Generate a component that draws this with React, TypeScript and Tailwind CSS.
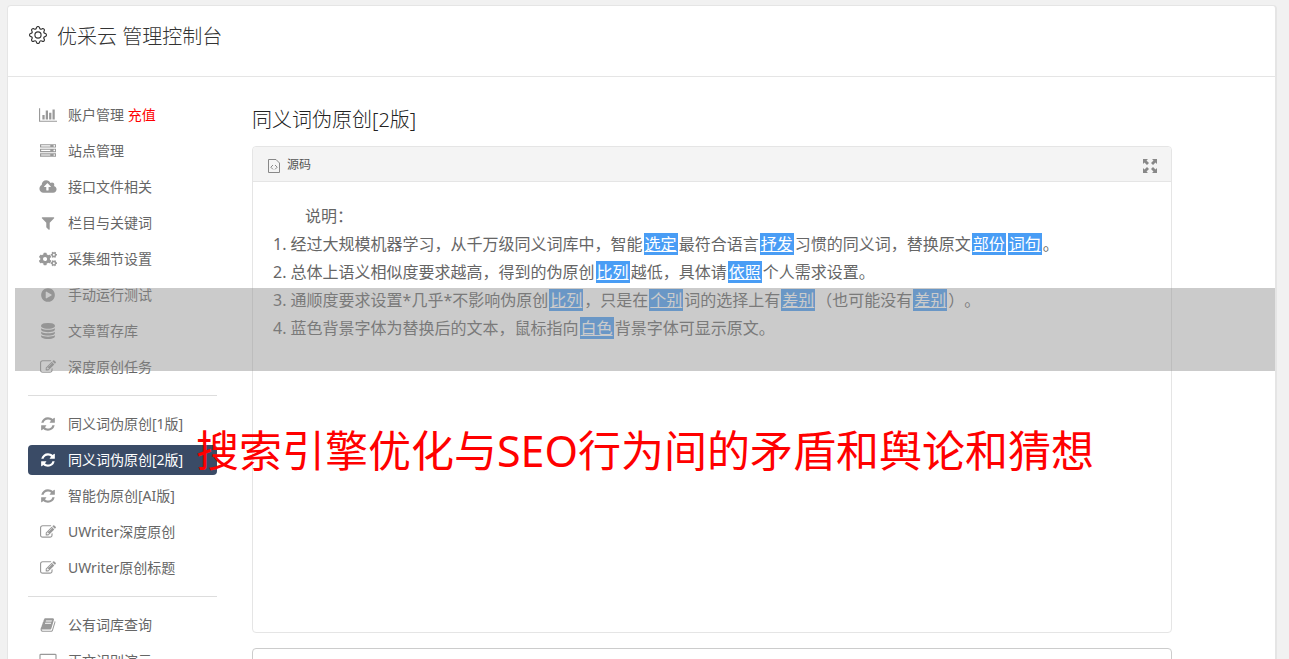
import type { ReactNode } from "react";
import clsx from "clsx";
import { BsGear } from "react-icons/bs";
import { FaCogs } from "react-icons/fa";

const icons = {
  chart: {
    width: 2048,
    d: "M640 896v512h-256v-512h256zm384-512v1024h-256v-1024h256zm1024 1152v128h-2048v-1536h128v1408h1920zm-640-896v768h-256v-768h256zm384-384v1152h-256v-1152h256z",
  },
  server: {
    width: 1792,
    d: "M128 1408h1024v-128h-1024v128zm0-512h1024v-128h-1024v128zm1568 448q0-40-28-68t-68-28-68 28-28 68 28 68 68 28 68-28 28-68zm-1568-960h1024v-128h-1024v128zm1568 448q0-40-28-68t-68-28-68 28-28 68 28 68 68 28 68-28 28-68zm0-512q0-40-28-68t-68-28-68 28-28 68 28 68 68 28 68-28 28-68zm96 832v384h-1792v-384h1792zm0-512v384h-1792v-384h1792zm0-512v384h-1792v-384h1792z",
  },
  upload: {
    width: 1920,
    d: "M1280 864q0-14-9-23l-352-352q-9-9-23-9t-23 9l-351 351q-10 12-10 24 0 14 9 23t23 9h224v352q0 13 9.5 22.5t22.5 9.5h192q13 0 22.5-9.5t9.5-22.5v-352h224q13 0 22.5-9.5t9.5-22.5zm640 288q0 159-112.5 271.5t-271.5 112.5h-1088q-185 0-316.5-131.5t-131.5-316.5q0-130 70-240t188-165q-2-30-2-43 0-212 150-362t362-150q156 0 285.5 87t188.5 231q71-62 166-62 106 0 181 75t75 181q0 76-41 138 130 31 213.5 135.5t83.5 238.5z",
  },
  filter: {
    width: 1792,
    d: "M1595 295q17 41-14 70l-493 493v742q0 42-39 59-13 5-25 5-27 0-45-19l-256-256q-19-19-19-45v-486l-493-493q-31-29-14-70 17-39 59-39h1280q42 0 59 39z",
  },
  play: {
    width: 1792,
    d: "M896 128q209 0 385.5 103t279.5 279.5 103 385.5-103 385.5-279.5 279.5-385.5 103-385.5-103-279.5-279.5-103-385.5 103-385.5 279.5-279.5 385.5-103zm384 823q32-18 32-55t-32-55l-544-320q-31-19-64-1-32 19-32 56v640q0 37 32 56 16 8 32 8 17 0 32-9z",
  },
  database: {
    width: 1792,
    d: "M896 768q237 0 443-43t325-127v170q0 69-103 128t-280 93.5-385 34.5-385-34.5-280-93.5-103-128v-170q119 84 325 127t443 43zm0 768q237 0 443-43t325-127v170q0 69-103 128t-280 93.5-385 34.5-385-34.5-280-93.5-103-128v-170q119 84 325 127t443 43zm0-384q237 0 443-43t325-127v170q0 69-103 128t-280 93.5-385 34.5-385-34.5-280-93.5-103-128v-170q119 84 325 127t443 43zm0-1152q208 0 385 34.5t280 93.5 103 128v128q0 69-103 128t-280 93.5-385 34.5-385-34.5-280-93.5-103-128v-128q0-69 103-128t280-93.5 385-34.5z",
  },
  edit: {
    width: 1792,
    d: "M888 1184l116-116-152-152-116 116v56h96v96h56zm440-720q-16-16-33 1l-350 350q-17 17-1 33t33-1l350-350q17-17 1-33zm80 594v190q0 119-84.5 203.5t-203.5 84.5h-832q-119 0-203.5-84.5t-84.5-203.5v-832q0-119 84.5-203.5t203.5-84.5h832q63 0 117 25 15 7 18 23 3 17-9 29l-49 49q-14 14-32 8-23-6-45-6h-832q-66 0-113 47t-47 113v832q0 66 47 113t113 47h832q66 0 113-47t47-113v-126q0-13 9-22l64-64q15-15 35-7t20 29zm-96-738l288 288-672 672h-288v-288zm444 132l-92 92-288-288 92-92q28-28 68-28t68 28l152 152q28 28 28 68t-28 68z",
  },
  refresh: {
    width: 1792,
    d: "M1639 1056q0 5-1 7-64 268-268 434.5t-478 166.5q-146 0-282.5-55t-243.5-157l-129 129q-19 19-45 19t-45-19-19-45v-448q0-26 19-45t45-19h448q26 0 45 19t19 45-19 45l-137 137q71 66 161 102t187 36q134 0 250-65t186-179q11-17 53-117 8-23 30-23h192q13 0 22.5 9.5t9.5 22.5zm25-800v448q0 26-19 45t-45 19h-448q-26 0-45-19t-19-45 19-45l138-138q-148-137-349-137-134 0-250 65t-186 179q-11 17-53 117-8 23-30 23h-199q-13 0-22.5-9.5t-9.5-22.5v-7q65-268 270-434.5t480-166.5q146 0 284 55.5t245 156.5l130-129q19-19 45-19t45 19 19 45z",
  },
  book: {
    width: 1792,
    d: "M1703 478q40 57 18 129l-275 906q-19 64-76.5 107.5t-122.5 43.5h-923q-77 0-148.5-53.5t-99.5-131.5q-24-67-2-127 0-4 3-27t4-37q1-8-3-21.5t-3-19.5q2-11 8-21t16.5-23.5 16.5-23.5q23-38 45-91.5t30-91.5q3-10 .5-30t-.5-28q3-11 17-28t17-23q21-36 42-92t25-90q1-9-2.5-32t.5-28q4-13 22-30.5t22-22.5q19-26 42.5-84.5t27.5-96.5q1-8-3-25.5t-2-26.5q2-8 9-18t18-23 17-21q8-12 16.5-30.5t15-35 16-36 19.5-32 26.5-23.5 36-11.5 47.5 5.5l-1 3q38-9 51-9h761q74 0 114 56t18 130l-274 906q-36 119-71.5 153.5t-128.5 34.5h-869q-27 0-38 15-11 16-1 43 24 70 144 70h923q29 0 56-15.5t35-41.5l300-987q7-22 5-57 38 15 59 43zm-1064 2q-4 13 2 22.5t20 9.5h608q13 0 25.5-9.5t16.5-22.5l21-64q4-13-2-22.5t-20-9.5h-608q-13 0-25.5 9.5t-16.5 22.5zm-83 256q-4 13 2 22.5t20 9.5h608q13 0 25.5-9.5t16.5-22.5l21-64q4-13-2-22.5t-20-9.5h-608q-13 0-25.5 9.5t-16.5 22.5z",
  },
  laptop: {
    width: 1920,
    d: "M128 96h1664q60 0 94 34t34 94v1064q0 60-34 94t-94 34h-1664q-60 0-94-34t-34-94v-1064q0-60 34-94t94-34zm32 128q-32 0-32 32v1000q0 32 32 32h1600q32 0 32-32v-1000q0-32-32-32zM0 1536h1920v128h-1920z",
  },
};

type IconName = keyof typeof icons;

interface NavItem {
  icon: IconName | "cogs";
  label: string;
  extra?: string;
  active?: boolean;
}

const navGroups: NavItem[][] = [
  [
    { icon: "chart", label: "账户管理", extra: "充值" },
    { icon: "server", label: "站点管理" },
    { icon: "upload", label: "接口文件相关" },
    { icon: "filter", label: "栏目与关键词" },
    { icon: "cogs", label: "采集细节设置" },
    { icon: "play", label: "手动运行测试" },
    { icon: "database", label: "文章暂存库" },
    { icon: "edit", label: "深度原创任务" },
  ],
  [
    { icon: "refresh", label: "同义词伪原创[1版]" },
    { icon: "refresh", label: "同义词伪原创[2版]", active: true },
    { icon: "refresh", label: "智能伪原创[AI版]" },
    { icon: "edit", label: "UWriter深度原创" },
    { icon: "edit", label: "UWriter原创标题" },
  ],
  [
    { icon: "book", label: "公有词库查询" },
    { icon: "laptop", label: "正文识别演示" },
  ],
];

function Icon({ name }: { name: IconName | "cogs" }) {
  if (name === "cogs") return <FaCogs className="h-4 w-[18px]" />;
  const { width, d } = icons[name];
  return (
    <svg viewBox={`0 0 ${width} 1792`} className="h-4 w-[18px]" fill="currentColor" fillRule="evenodd" aria-hidden="true">
      <path d={d} />
    </svg>
  );
}

function NavLink({ item }: { item: NavItem }) {
  return (
    <a
      href="#"
      className={clsx(
        "flex h-[30px] items-center gap-[11px] rounded pl-[11px] text-sm whitespace-nowrap",
        item.active ? "bg-[#3a4b66] text-white" : "text-[#666]"
      )}
    >
      <span className={item.active ? "text-white" : "text-[#999]"}>
        <Icon name={item.icon} />
      </span>
      <span>
        {item.label}
        {item.extra && <span className="text-[#f00]"> {item.extra}</span>}
      </span>
    </a>
  );
}

function Word({ children }: { children: ReactNode }) {
  return <span className="mx-px bg-[#499df5] px-px leading-none text-white underline">{children}</span>;
}

export default function App() {
  return (
    <div className="h-screen overflow-hidden bg-[#f1f1f1] pt-[5px] pr-3 pl-[7px] font-['Noto_Sans','Noto_Sans_CJK_SC',sans-serif] [text-spacing-trim:space-all]">
      <div className="relative min-h-full rounded border border-r-2 border-[#e5e5e5] bg-white">
        <header className="flex h-[71px] items-center gap-2.5 border-b border-[#e5e5e5] px-5 pb-2 text-[#333]">
          <BsGear className="mb-1 ml-px size-[18px]" />
          <h1 className="text-xl font-light">优采云 管理控制台</h1>
        </header>

        <div className="flex gap-[35px] px-5 pt-[23px]">
          <nav className="w-[189px] shrink-0">
            {navGroups.map((group, i) => (
              <ul key={i} className={clsx("space-y-1.5", i > 0 && "mt-[13px] border-t border-[#ddd] pt-[13px]")}>
                {group.map((item) => (
                  <li key={item.label}>
                    <NavLink item={item} />
                  </li>
                ))}
              </ul>
            ))}
          </nav>

          <main className="min-w-0 max-w-[920px] flex-1 pt-1">
            <h2 className="text-xl leading-8 font-light text-[#222]">同义词伪原创[2版]</h2>

            <section className="mt-2.5 rounded border border-[#e5e5e5]">
              <div className="flex h-[35px] items-center justify-between rounded-t border-b border-[#e5e5e5] bg-[#f4f4f4] pr-3.5 pl-[15px]">
                <button type="button" className="flex items-center gap-[7px] pt-0.5 text-xs text-[#555]">
                  <svg viewBox="0 0 12 14" className="mt-0.5 h-3.5 w-3" fill="none" stroke="#888" aria-hidden="true">
                    <path d="M.5.5h7.5l3.5 3.5v9.5H.5z" />
                    <path d="M5 6 2.8 8.2 5 10.4M7 6l2.2 2.2L7 10.4" />
                  </svg>
                  源码
                </button>
                <button type="button" aria-label="全屏" className="mt-1">
                  <svg viewBox="0 0 14 14" className="size-3.5" fill="#888" aria-hidden="true">
                    <path d="M0 0h5L3.5 1.5 6 4 4 6 1.500 3.500 0 5zM14 0v5l-1.500-1.500L10 6 8 4l2.500-2.500L9 0zM0 14V9l1.500 1.500L4 8l2 2-2.500 2.500L5 14zM14 14H9l1.500-1.500L8 10l2-2 2.500 2.500L14 9z" />
                  </svg>
                </button>
              </div>
              <div className="min-h-[450px] p-5 text-base leading-7 text-[#666]">
                <p className="indent-8">说明：</p>
                <p>
                  1. 经过大规模机器学习，从千万级同义词库中，智能<Word>选定</Word>最符合语言<Word>抒发</Word>
                  习惯的同义词，替换原文<Word>部份</Word><Word>词句</Word>。
                </p>
                <p>
                  2. 总体上语义相似度要求越高，得到的伪原创<Word>比列</Word>越低，具体请<Word>依照</Word>个人需求设置。
                </p>
                <p>
                  3. 通顺度要求设置*几乎*不影响伪原创<Word>比列</Word>，只是在<Word>个别</Word>词的选择上有
                  <Word>差别</Word>（也可能没有<Word>差别</Word>）。
                </p>
                <p>
                  4. 蓝色背景字体为替换后的文本，鼠标指向<Word>白色</Word>背景字体可显示原文。
                </p>
              </div>
            </section>

            <textarea aria-label="原文" className="mt-[15px] block h-40 w-full resize-none rounded border border-[#ccc] bg-white p-3" />
          </main>
        </div>

        {/* translucent band and headline lie over the whole console */}
        <div className="pointer-events-none absolute top-[282px] right-0 left-[7px]">
          <div className="h-[83px] bg-[#909090]/47" />
          <p className="mt-12 text-center text-[43px] leading-[64px] whitespace-nowrap text-[#f00]">
            搜索引擎优化与SEO行为间的矛盾和舆论和猜想
          </p>
        </div>
      </div>
    </div>
  );
}
